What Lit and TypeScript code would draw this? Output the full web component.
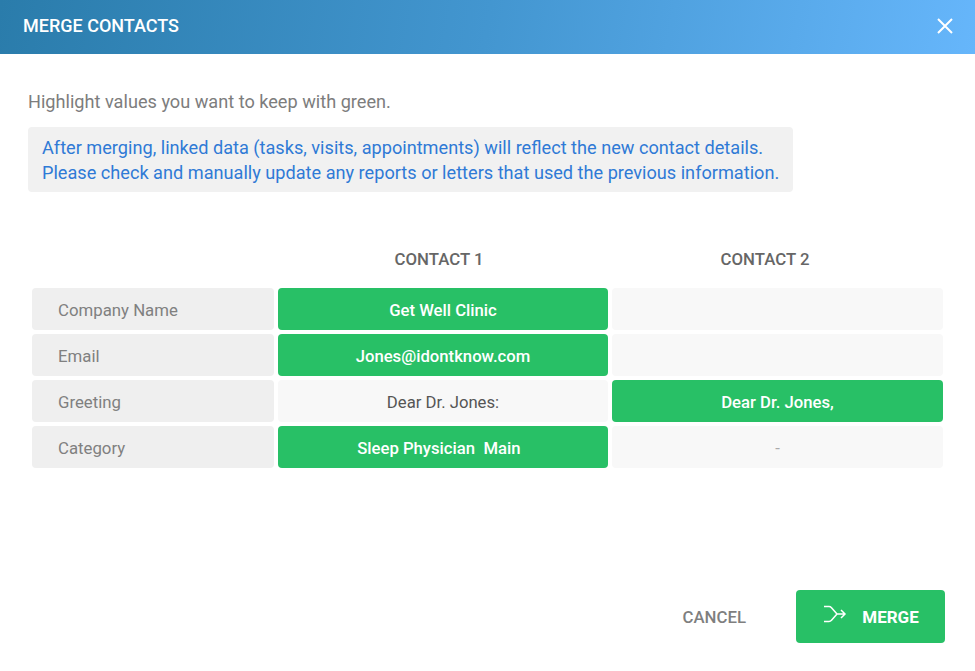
import { LitElement, html, css } from 'lit';
import { customElement } from 'lit/decorators.js';

interface Row {
  label: string;
  first: string;
  second: string;
  keep: 1 | 2;
}

const rows: Row[] = [
  { label: 'Company Name', first: 'Get Well Clinic', second: '', keep: 1 },
  { label: 'Email', first: 'Jones@idontknow.com', second: '', keep: 1 },
  { label: 'Greeting', first: 'Dear Dr. Jones:', second: 'Dear Dr. Jones,', keep: 2 },
  { label: 'Category', first: 'Sleep Physician  Main  ', second: '-', keep: 1 },
];

@customElement('app-root')
export class AppRoot extends LitElement {
  static styles = css`
    :host {
      display: flex;
      flex-direction: column;
      height: 671px;
      background: #fff;
      font-family: Roboto, "Liberation Sans", sans-serif;
      color: #757575;
    }

    .header {
      height: 54px;
      flex: none;
      display: flex;
      align-items: center;
      justify-content: space-between;
      padding: 0 21px 3px 23px;
      box-sizing: border-box;
      background: linear-gradient(100deg, #2a7cab 0%, #4396d0 50%, #66b6fb 100%);
      color: #fff;
    }

    .title {
      font-size: 18px;
      font-weight: 500;
    }

    .close {
      display: block;
      width: 18px;
      height: 18px;
      margin-top: 1px;
    }

    .body {
      flex: 1;
      padding: 38px 32px 0 28px;
    }

    .hint {
      font-size: 18.15px;
      line-height: 20px;
      color: #7d7d7d;
    }

    .notice {
      width: 765px;
      box-sizing: border-box;
      margin-top: 15px;
      padding: 8px 14px 7px;
      background: #f1f1f1;
      border-radius: 4px;
      color: #2f7ad6;
      font-size: 18.15px;
      line-height: 25px;
      white-space: nowrap;
    }

    .grid {
      display: grid;
      grid-template-columns: 242px 330px 331px;
      grid-template-rows: 40px;
      grid-auto-rows: 42px;
      gap: 4px;
      margin: 52px 0 0 4px;
    }

    .head {
      height: 34px;
      display: flex;
      align-items: center;
      justify-content: center;
      font-size: 16.8px;
      font-weight: 500;
      color: #666;
      padding-bottom: 4px;
      box-sizing: border-box;
    }

    .head.first {
      padding-right: 8px;
    }

    .head.second {
      padding-right: 25px;
    }

    .label,
    .value {
      display: flex;
      align-items: center;
      padding-top: 2px;
      box-sizing: border-box;
      border-radius: 4px;
    }

    .label {
      padding-left: 26px;
      background: #efefef;
      color: #808080;
      font-size: 16.8px;
    }

    .value {
      justify-content: center;
      background: #f8f8f8;
      color: #555;
      font-size: 16.7px;
      white-space: pre;
    }

    .value.keep {
      background: #28c066;
      color: #fff;
      font-weight: 500;
    }

    .value.empty {
      color: #aaa;
    }

    .actions {
      flex: none;
      display: flex;
      justify-content: flex-end;
      align-items: center;
      gap: 50px;
      padding: 0 30px 28px 0;
    }

    .cancel {
      font-size: 16.8px;
      font-weight: 500;
      color: #7f7f7f;
    }

    .merge {
      width: 149px;
      height: 53px;
      display: flex;
      align-items: center;
      justify-content: center;
      gap: 15px;
      padding-left: 1px;
      box-sizing: border-box;
      border-radius: 4px;
      background: #28c066;
      color: #fff;
      font-size: 17px;
      font-weight: 700;
    }

    .merge svg {
      display: block;
      margin-top: -5px;
    }
  `;

  private renderValue(text: string, keep: boolean) {
    const cls = keep ? 'value keep' : text === '-' ? 'value empty' : 'value';
    return html`<div class=${cls}>${text}</div>`;
  }

  render() {
    return html`
      <div class="header">
        <span class="title">MERGE CONTACTS</span>
        <svg class="close" viewBox="0 0 18 18" fill="none" stroke="#fff" stroke-width="2">
          <path d="M2 2l14 14M16 2L2 16" />
        </svg>
      </div>
      <div class="body">
        <div class="hint">Highlight values you want to keep with green.</div>
        <div class="notice">
          After merging, linked data (tasks, visits, appointments) will reflect the new contact details.<br />
          Please check and manually update any reports or letters that used the previous information.
        </div>
        <div class="grid">
          <div class="head"></div>
          <div class="head first">CONTACT 1</div>
          <div class="head second">CONTACT 2</div>
          ${rows.map(
            (row) => html`
              <div class="label">${row.label}</div>
              ${this.renderValue(row.first, row.keep === 1)}
              ${this.renderValue(row.second, row.keep === 2)}
            `
          )}
        </div>
      </div>
      <div class="actions">
        <span class="cancel">CANCEL</span>
        <div class="merge">
          <svg width="24" height="18" viewBox="0 0 24 18" fill="none" stroke="#fff" stroke-width="1.5">
            <path d="M1 1.5h5c1 0 1.8.4 2.5 1.2L14 9l-5.5 6.3c-.7.8-1.5 1.2-2.5 1.2H1M14 9h8M18 5l4 4-4 4" />
          </svg>
          MERGE
        </div>
      </div>
    `;
  }
}
